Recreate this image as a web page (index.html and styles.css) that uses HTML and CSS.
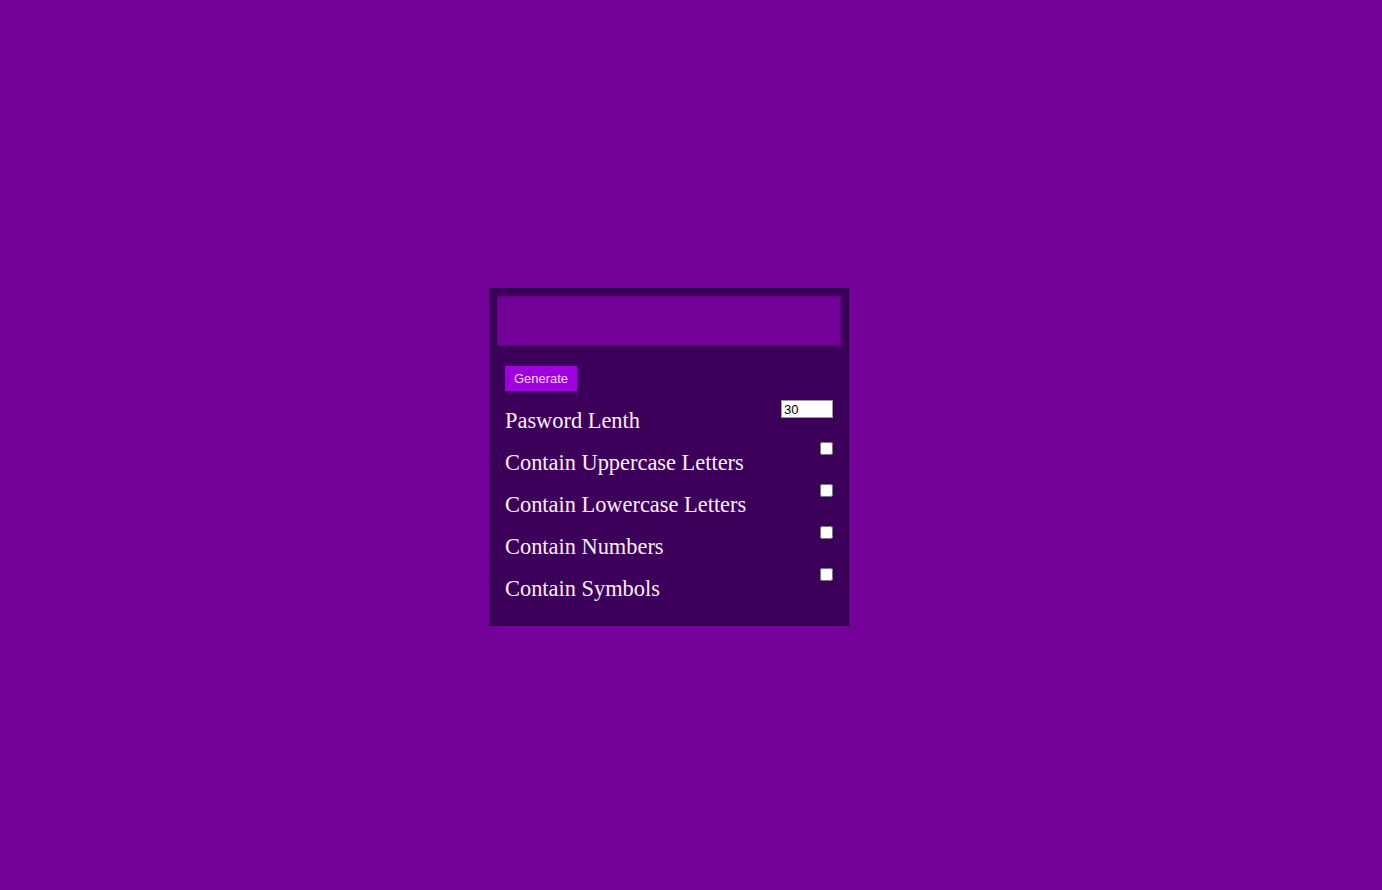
FILE: index.html
```html
<!DOCTYPE html>
<html>
<head>
<meta charset="utf-8">
<link rel="stylesheet" href="styles.css">
</head>
<body>
<div class="page">
  <div class="card">
    <div class="display"></div>
    <div class="body">
      <button class="generate">Generate</button>
      <div class="row">
        <span class="label">Pasword Lenth</span>
        <input class="length" type="number" value="30">
      </div>
      <div class="row">
        <span class="label">Contain Uppercase Letters</span>
        <input class="check" type="checkbox">
      </div>
      <div class="row">
        <span class="label">Contain Lowercase Letters</span>
        <input class="check" type="checkbox">
      </div>
      <div class="row">
        <span class="label">Contain Numbers</span>
        <input class="check" type="checkbox">
      </div>
      <div class="row">
        <span class="label">Contain Symbols</span>
        <input class="check" type="checkbox">
      </div>
    </div>
  </div>
</div>
</body>
</html>
```
FILE: styles.css
```css
html, body {
  margin: 0;
  padding: 0;
  height: 100%;
}
body {
  background: #74009a;
  font-family: "Liberation Serif", "Times New Roman", serif;
}
.page {
  height: 890px;
  display: flex;
  align-items: flex-start;
  justify-content: center;
}
.card {
  margin-top: 288px;
  margin-right: 44px;
  width: 360px;
  box-sizing: border-box;
  background: #3d005a;
  border: 2px solid #350050;
  padding: 6px 6px 14px 6px;
}
.display {
  height: 50px;
  background: #74009a;
  border: 1px solid #6a008e;
  box-sizing: border-box;
}
.body {
  padding: 20px 8px 0 8px;
  display: flex;
  flex-direction: column;
}
.generate {
  align-self: flex-start;
  font-family: "Liberation Sans", Arial, sans-serif;
  font-size: 13px;
  color: #f5dcff;
  background: #a000e0;
  border: none;
  padding: 0 8px;
  height: 25px;
  width: 72px;
  margin: 0 0 9px 0;
  cursor: pointer;
}
.row {
  display: flex;
  justify-content: space-between;
  align-items: flex-start;
  height: 42px;
}
.label {
  color: #fbeefc;
  font-size: 22.4px;
  line-height: 25px;
  padding-top: 8px;
}
.length {
  width: 52px;
  height: 18px;
  box-sizing: border-box;
  margin: 0;
  padding: 0 2px;
  border: 1px solid #9a9a9a;
  font-family: "Liberation Sans", Arial, sans-serif;
  font-size: 13px;
  background: #fff;
  color: #000;
}
.check {
  width: 13px;
  height: 13px;
  margin: 0;
}
```
